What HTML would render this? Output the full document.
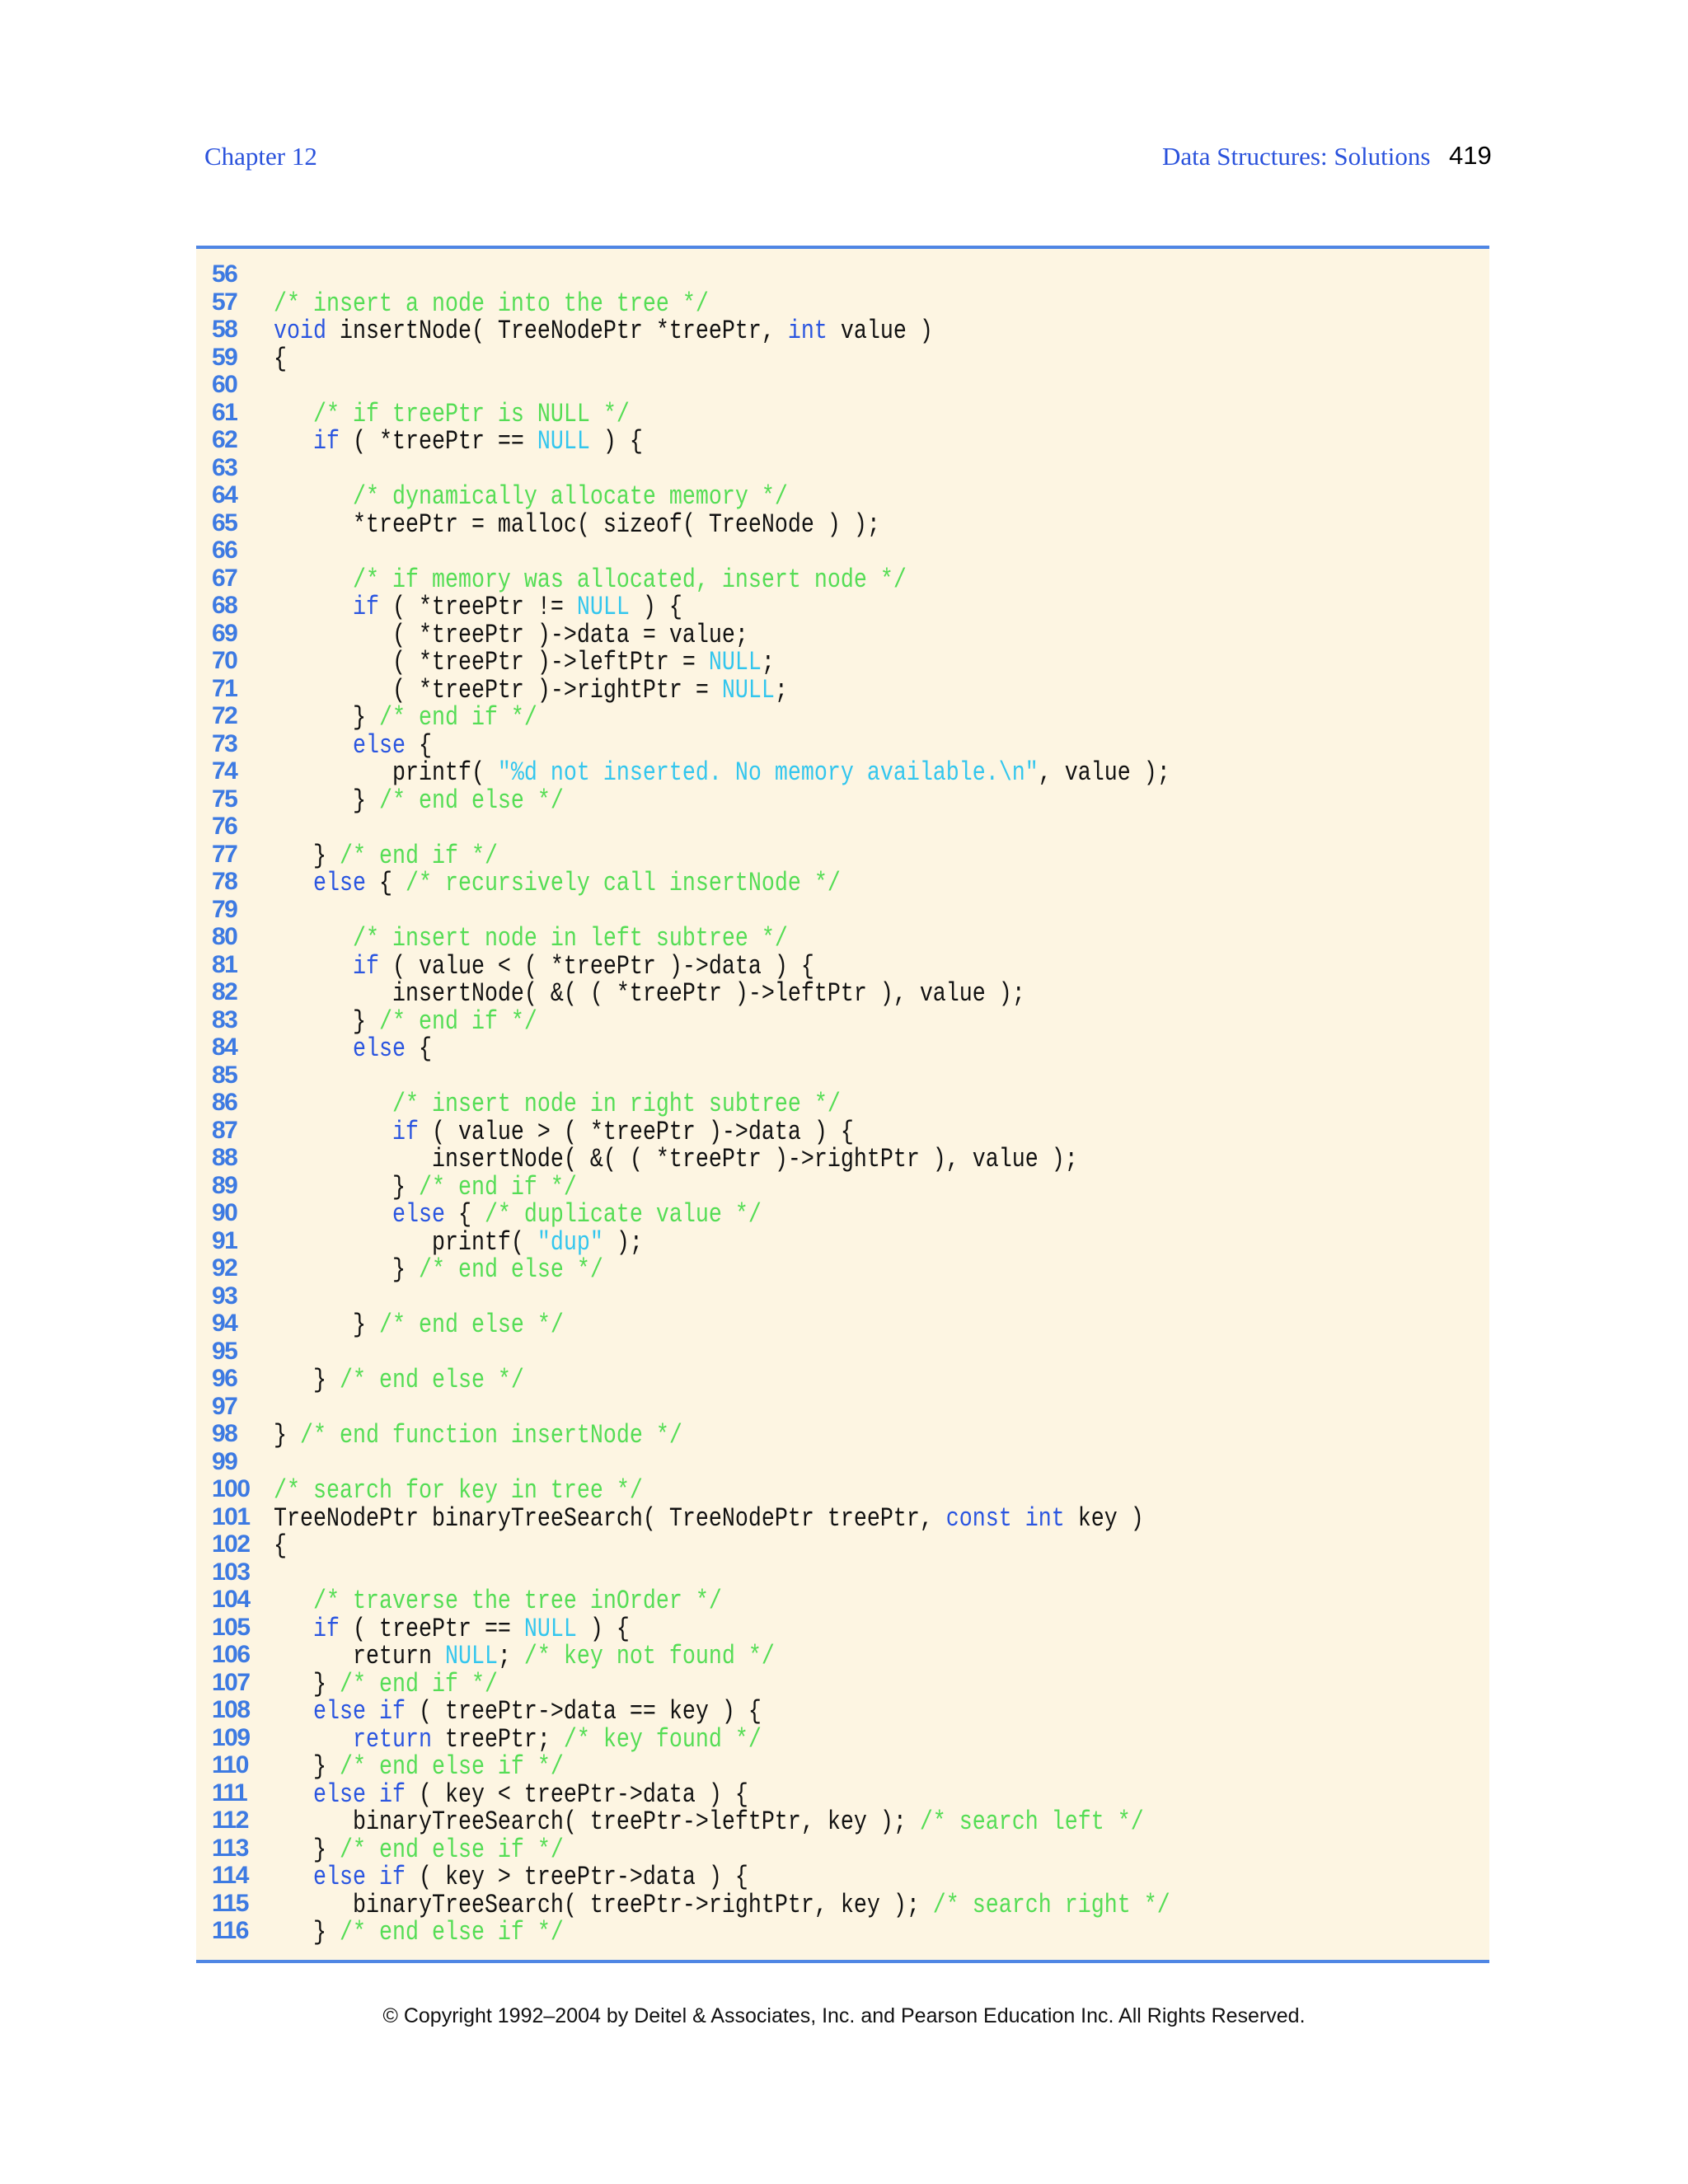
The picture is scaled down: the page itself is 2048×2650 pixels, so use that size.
<!DOCTYPE html>
<html><head><meta charset="utf-8"><style>
html,body{margin:0;padding:0;background:#fff;}
body{width:2048px;height:2650px;position:relative;overflow:hidden;}
.hdr{position:absolute;font-family:"Liberation Serif",serif;color:#2a52dc;font-size:31px;top:172px;}
.pg{position:absolute;font-family:"Liberation Sans",sans-serif;color:#000;font-size:31px;top:171px;left:1758px;}
.box{position:absolute;left:238px;top:298px;width:1569px;height:2084px;background:#fdf5e2;border-top:4px solid #4f86e4;border-bottom:4px solid #4f86e4;box-sizing:border-box;}
.code{position:absolute;left:0;top:318px;width:2048px;}
.l{height:33.5px;position:relative;white-space:pre;}
.n{position:absolute;left:257px;top:-2px;line-height:33.5px;font-family:"Liberation Sans",sans-serif;font-weight:bold;font-size:30px;color:#3d7ae2;letter-spacing:-1.5px;}
.c{position:absolute;left:332px;top:0;line-height:33.5px;font-family:"Liberation Mono",monospace;font-size:32px;color:#111;transform:scaleX(0.833);transform-origin:0 50%;}
.k{color:#2a55e0}.m{color:#55dd55}.s{color:#33c6ee}
.copy{position:absolute;top:2432px;left:0;width:2048px;text-align:center;font-family:"Liberation Sans",sans-serif;font-size:25px;color:#111;}
</style></head><body>
<div class="hdr" style="left:248px">Chapter 12</div>
<div class="hdr" style="left:1410px">Data Structures: Solutions</div>
<div class="pg">419</div>
<div class="box"></div>
<div class="code">
<div class="l"><span class="n">56</span><span class="c"></span></div>
<div class="l"><span class="n">57</span><span class="c"><span class="m">/* insert a node into the tree */</span></span></div>
<div class="l"><span class="n">58</span><span class="c"><span class="k">void</span> insertNode( TreeNodePtr *treePtr, <span class="k">int</span> value )</span></div>
<div class="l"><span class="n">59</span><span class="c">{</span></div>
<div class="l"><span class="n">60</span><span class="c"></span></div>
<div class="l"><span class="n">61</span><span class="c">   <span class="m">/* if treePtr is NULL */</span></span></div>
<div class="l"><span class="n">62</span><span class="c">   <span class="k">if</span> ( *treePtr == <span class="s">NULL</span> ) {</span></div>
<div class="l"><span class="n">63</span><span class="c"></span></div>
<div class="l"><span class="n">64</span><span class="c">      <span class="m">/* dynamically allocate memory */</span></span></div>
<div class="l"><span class="n">65</span><span class="c">      *treePtr = malloc( sizeof( TreeNode ) );</span></div>
<div class="l"><span class="n">66</span><span class="c"></span></div>
<div class="l"><span class="n">67</span><span class="c">      <span class="m">/* if memory was allocated, insert node */</span></span></div>
<div class="l"><span class="n">68</span><span class="c">      <span class="k">if</span> ( *treePtr != <span class="s">NULL</span> ) {</span></div>
<div class="l"><span class="n">69</span><span class="c">         ( *treePtr )-&gt;data = value;</span></div>
<div class="l"><span class="n">70</span><span class="c">         ( *treePtr )-&gt;leftPtr = <span class="s">NULL</span>;</span></div>
<div class="l"><span class="n">71</span><span class="c">         ( *treePtr )-&gt;rightPtr = <span class="s">NULL</span>;</span></div>
<div class="l"><span class="n">72</span><span class="c">      } <span class="m">/* end if */</span></span></div>
<div class="l"><span class="n">73</span><span class="c">      <span class="k">else</span> {</span></div>
<div class="l"><span class="n">74</span><span class="c">         printf( <span class="s">"%d not inserted. No memory available.\n"</span>, value );</span></div>
<div class="l"><span class="n">75</span><span class="c">      } <span class="m">/* end else */</span></span></div>
<div class="l"><span class="n">76</span><span class="c"></span></div>
<div class="l"><span class="n">77</span><span class="c">   } <span class="m">/* end if */</span></span></div>
<div class="l"><span class="n">78</span><span class="c">   <span class="k">else</span> { <span class="m">/* recursively call insertNode */</span></span></div>
<div class="l"><span class="n">79</span><span class="c"></span></div>
<div class="l"><span class="n">80</span><span class="c">      <span class="m">/* insert node in left subtree */</span></span></div>
<div class="l"><span class="n">81</span><span class="c">      <span class="k">if</span> ( value &lt; ( *treePtr )-&gt;data ) {</span></div>
<div class="l"><span class="n">82</span><span class="c">         insertNode( &amp;( ( *treePtr )-&gt;leftPtr ), value );</span></div>
<div class="l"><span class="n">83</span><span class="c">      } <span class="m">/* end if */</span></span></div>
<div class="l"><span class="n">84</span><span class="c">      <span class="k">else</span> {</span></div>
<div class="l"><span class="n">85</span><span class="c"></span></div>
<div class="l"><span class="n">86</span><span class="c">         <span class="m">/* insert node in right subtree */</span></span></div>
<div class="l"><span class="n">87</span><span class="c">         <span class="k">if</span> ( value &gt; ( *treePtr )-&gt;data ) {</span></div>
<div class="l"><span class="n">88</span><span class="c">            insertNode( &amp;( ( *treePtr )-&gt;rightPtr ), value );</span></div>
<div class="l"><span class="n">89</span><span class="c">         } <span class="m">/* end if */</span></span></div>
<div class="l"><span class="n">90</span><span class="c">         <span class="k">else</span> { <span class="m">/* duplicate value */</span></span></div>
<div class="l"><span class="n">91</span><span class="c">            printf( <span class="s">"dup"</span> );</span></div>
<div class="l"><span class="n">92</span><span class="c">         } <span class="m">/* end else */</span></span></div>
<div class="l"><span class="n">93</span><span class="c"></span></div>
<div class="l"><span class="n">94</span><span class="c">      } <span class="m">/* end else */</span></span></div>
<div class="l"><span class="n">95</span><span class="c"></span></div>
<div class="l"><span class="n">96</span><span class="c">   } <span class="m">/* end else */</span></span></div>
<div class="l"><span class="n">97</span><span class="c"></span></div>
<div class="l"><span class="n">98</span><span class="c">} <span class="m">/* end function insertNode */</span></span></div>
<div class="l"><span class="n">99</span><span class="c"></span></div>
<div class="l"><span class="n">100</span><span class="c"><span class="m">/* search for key in tree */</span></span></div>
<div class="l"><span class="n">101</span><span class="c">TreeNodePtr binaryTreeSearch( TreeNodePtr treePtr, <span class="k">const int</span> key )</span></div>
<div class="l"><span class="n">102</span><span class="c">{</span></div>
<div class="l"><span class="n">103</span><span class="c"></span></div>
<div class="l"><span class="n">104</span><span class="c">   <span class="m">/* traverse the tree inOrder */</span></span></div>
<div class="l"><span class="n">105</span><span class="c">   <span class="k">if</span> ( treePtr == <span class="s">NULL</span> ) {</span></div>
<div class="l"><span class="n">106</span><span class="c">      return <span class="s">NULL</span>; <span class="m">/* key not found */</span></span></div>
<div class="l"><span class="n">107</span><span class="c">   } <span class="m">/* end if */</span></span></div>
<div class="l"><span class="n">108</span><span class="c">   <span class="k">else if</span> ( treePtr-&gt;data == key ) {</span></div>
<div class="l"><span class="n">109</span><span class="c">      <span class="k">return</span> treePtr; <span class="m">/* key found */</span></span></div>
<div class="l"><span class="n">110</span><span class="c">   } <span class="m">/* end else if */</span></span></div>
<div class="l"><span class="n">111</span><span class="c">   <span class="k">else if</span> ( key &lt; treePtr-&gt;data ) {</span></div>
<div class="l"><span class="n">112</span><span class="c">      binaryTreeSearch( treePtr-&gt;leftPtr, key ); <span class="m">/* search left */</span></span></div>
<div class="l"><span class="n">113</span><span class="c">   } <span class="m">/* end else if */</span></span></div>
<div class="l"><span class="n">114</span><span class="c">   <span class="k">else if</span> ( key &gt; treePtr-&gt;data ) {</span></div>
<div class="l"><span class="n">115</span><span class="c">      binaryTreeSearch( treePtr-&gt;rightPtr, key ); <span class="m">/* search right */</span></span></div>
<div class="l"><span class="n">116</span><span class="c">   } <span class="m">/* end else if */</span></span></div>
</div>
<div class="copy">© Copyright 1992–2004 by Deitel &amp; Associates, Inc. and Pearson Education Inc. All Rights Reserved.</div>
</body></html>
